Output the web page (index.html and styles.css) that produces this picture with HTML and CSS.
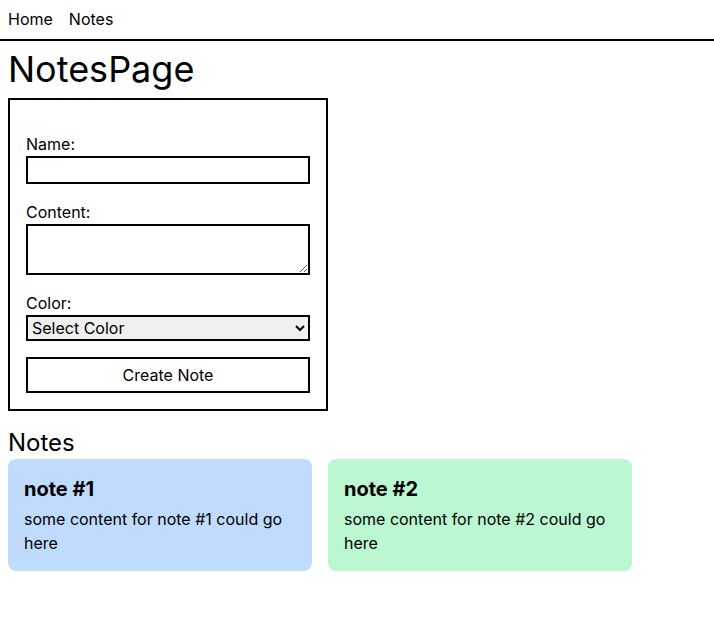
FILE: index.html
```html
<!DOCTYPE html>
<html lang="en">
<head>
<meta charset="utf-8">
<title>NotesPage</title>
<link rel="stylesheet" href="styles.css">
</head>
<body>
<nav class="nav">
  <a class="nav-link" href="#">Home</a>
  <a class="nav-link" href="#">Notes</a>
</nav>
<main class="main">
  <h1 class="page-title">NotesPage</h1>
  <form class="note-form">
    <div class="field">
      <label class="field-label" for="name">Name:</label>
      <input class="field-input" id="name" type="text">
    </div>
    <div class="field">
      <label class="field-label" for="content">Content:</label>
      <textarea class="field-textarea" id="content"></textarea>
    </div>
    <div class="field">
      <label class="field-label" for="color">Color:</label>
      <select class="field-select" id="color">
        <option>Select Color</option>
        <option>Blue</option>
        <option>Green</option>
      </select>
    </div>
    <button class="create-btn" type="button">Create Note</button>
  </form>
  <h2 class="section-title">Notes</h2>
  <div class="notes">
    <div class="note note-blue">
      <h3 class="note-title">note #1</h3>
      <p class="note-text">some content for note #1 could go here</p>
    </div>
    <div class="note note-green">
      <h3 class="note-title">note #2</h3>
      <p class="note-text">some content for note #2 could go here</p>
    </div>
  </div>
</main>
</body>
</html>
```
FILE: styles.css
```css
* { box-sizing: border-box; }
body {
  margin: 0;
  font-family: Inter, "Noto Sans", sans-serif;
  font-size: 16px;
  line-height: 1.5;
  color: #000;
  background: #fff;
}
.nav {
  display: flex;
  gap: 16px;
  padding: 7px 8px 8px;
  border-bottom: 2px solid #000;
}
.nav-link {
  color: #000;
  text-decoration: none;
  line-height: 24px;
}
.main { padding: 0 8px; }
.page-title {
  margin: 8px 0 9px;
  font-size: 36px;
  line-height: 40px;
  font-weight: 400;
}
.note-form {
  width: 320px;
  border: 2px solid #000;
  padding: 16px;
  display: flex;
  flex-direction: column;
  gap: 16px;
}
.field {
  display: flex;
  flex-direction: column;
}
.field:first-child { margin-top: 16px; }
.field-label { line-height: 24px; }
.field-input, .field-textarea, .field-select, .create-btn {
  font-family: Inter, "Noto Sans", sans-serif;
  font-size: 16px;
  color: #000;
  border: 2px solid #000;
  border-radius: 0;
  margin: 0;
}
.field-input { height: 28px; padding: 2px 4px; background: #fff; }
.field-textarea { height: 51px; padding: 2px 4px; background: #fff; }
.field-select { height: 26px; padding: 0; background: #efefef; }
.create-btn {
  height: 36px;
  background: #fff;
  cursor: pointer;
}
.section-title {
  margin: 16px 0 0;
  font-size: 24px;
  line-height: 32px;
  font-weight: 400;
}
.notes {
  display: flex;
  gap: 16px;
}
.note {
  width: 304px;
  padding: 16px;
  border-radius: 8px;
}
.note-blue { background: #bfdbfe; }
.note-green { background: #bbf7d0; }
.note-title {
  margin: 0;
  font-size: 20px;
  line-height: 28px;
  font-weight: 700;
}
.note-text { margin: 4px 0 0; line-height: 24px; }
```
